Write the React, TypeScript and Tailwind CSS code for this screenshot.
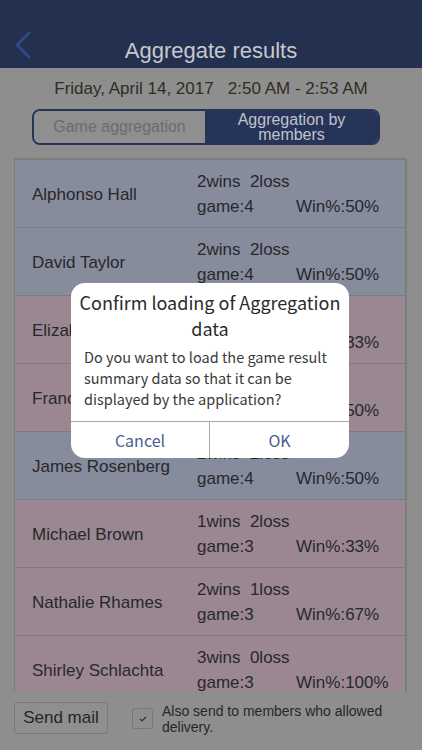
import React from "react";

type Row = { name: string; w: number; l: number; g: number; pct: string; pink: boolean };

const rows: Row[] = [
  { name: "Alphonso Hall", w: 2, l: 2, g: 4, pct: "50%", pink: false },
  { name: "David Taylor", w: 2, l: 2, g: 4, pct: "50%", pink: false },
  { name: "Elizabeth Moore", w: 1, l: 2, g: 3, pct: "33%", pink: true },
  { name: "Francis Wood", w: 2, l: 2, g: 4, pct: "50%", pink: true },
  { name: "James Rosenberg", w: 2, l: 2, g: 4, pct: "50%", pink: false },
  { name: "Michael Brown", w: 1, l: 2, g: 3, pct: "33%", pink: true },
  { name: "Nathalie Rhames", w: 2, l: 1, g: 3, pct: "67%", pink: true },
  { name: "Shirley Schlachta", w: 3, l: 0, g: 3, pct: "100%", pink: true },
];

export default function App() {
  return (
    <div className="relative w-[422px] h-[750px] overflow-hidden bg-[#8e8e8e] flex flex-col [font-family:'Liberation_Sans',Arial,sans-serif]">
      {/* header */}
      <div className="h-[68px] shrink-0 bg-[#243050] grid grid-cols-[60px_1fr_60px] items-end pb-[3px]">
        <div className="pl-[14px] pb-[6px]">
          <svg width="18" height="28" viewBox="0 0 18 28">
            <path d="M15 2 L3 14 L15 26" fill="none" stroke="#2f4a85" strokeWidth="3" strokeLinecap="round" strokeLinejoin="round" />
          </svg>
        </div>
        <div className="text-center text-[22px] leading-[28px] text-[#c6c8cd]">Aggregate results</div>
        <div />
      </div>

      {/* date */}
      <div className="h-[40px] shrink-0 flex items-center justify-center pt-[1px] text-[17px] text-[#2e2d22] whitespace-pre">
        {"Friday, April 14, 2017   2:50 AM - 2:53 AM"}
      </div>

      {/* segmented */}
      <div className="ml-[32px] mt-[1px] w-[348px] h-[36px] shrink-0 flex border-2 border-[#27345a] rounded-[8px] overflow-hidden">
        <div className="w-[171px] flex items-center justify-center text-[16px] text-[#6c6c6c] bg-[#8f8f8f]">Game aggregation</div>
        <div className="flex-1 flex flex-col items-center justify-center bg-[#27345a] text-[16px] leading-[15px] text-[#c0c3c9]">
          <span>Aggregation by</span>
          <span>members</span>
        </div>
      </div>

      {/* list */}
      <div className="ml-[14px] mt-[13px] w-[393px] h-[534px] shrink-0 overflow-hidden border-t-2 border-l border-r-2 border-[#7c7c7c]">
        {rows.map((r) => (
          <div
            key={r.name}
            className={`h-[68px] flex items-center pl-[17px] border-b border-[#7d7b82] text-[17px] text-[#29272d] ${r.pink ? "bg-[#9a8791]" : "bg-[#868c9b]"}`}
          >
            <div className="w-[165px] pt-[2px]">{r.name}</div>
            <div className="flex flex-col leading-[25px] pt-[1px]">
              <div className="whitespace-pre">{`${r.w}wins  ${r.l}loss`}</div>
              <div className="flex">
                <span className="w-[99px]">game:{r.g}</span>
                <span>Win%:{r.pct}</span>
              </div>
            </div>
          </div>
        ))}
      </div>

      {/* bottom bar */}
      <div className="flex items-start pt-[10px] pl-[14px]">
        <div className="w-[94px] h-[32px] flex items-center justify-center border border-[#7a7a7a] rounded-[3px] bg-[#8f8f8f] text-[17px] text-[#262626]">
          Send mail
        </div>
        <div className="ml-[24px] mt-[6px] w-[21px] h-[21px] border border-[#777] rounded-[3px] flex items-center justify-center">
          <svg width="8" height="6" viewBox="0 0 8 6">
            <path d="M1 3 L3 5 L7 1" fill="none" stroke="#333" strokeWidth="1.2" />
          </svg>
        </div>
        <div className="ml-[9px] mt-[1px] text-[14px] leading-[16px] text-[#262626] w-[240px]">
          Also send to members who allowed delivery.
        </div>
      </div>

      {/* dialog */}
      <div className="absolute left-[71px] top-[283px] w-[278px] h-[175px] bg-white rounded-[14px] flex flex-col [font-family:'Noto_Sans_CJK_JP','Noto_Sans',sans-serif]">
        <div className="pt-[6px] px-[6px] text-center text-[18px] leading-[26px] text-[#2b2b2b]">
          Confirm loading of Aggregation data
        </div>
        <div className="mt-[5px] px-[13px] text-[14.5px] leading-[21px] text-[#3a3a3a]">
          Do you want to load the game result summary data so that it can be displayed by the application?
        </div>
        <div className="mt-auto h-[37px] flex border-t border-[#a9a9a9]">
          <div className="w-[139px] flex items-center justify-center text-[16px] text-[#4c5d8e] border-r border-[#a9a9a9]">Cancel</div>
          <div className="flex-1 flex items-center justify-center text-[16px] text-[#4c5d8e]">OK</div>
        </div>
      </div>
    </div>
  );
}
